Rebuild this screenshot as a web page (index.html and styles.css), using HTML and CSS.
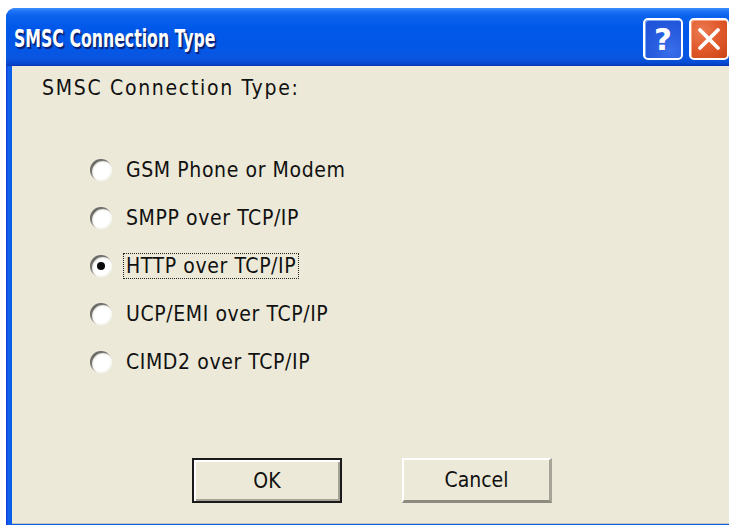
FILE: index.html
```html
<!DOCTYPE html>
<html lang="en">
<head>
<meta charset="utf-8">
<title>SMSC Connection Type</title>
<link rel="stylesheet" href="styles.css">
</head>
<body>
<div class="window">
  <div class="titlebar">
    <span class="title">SMSC Connection Type</span>
    <div class="caption-buttons">
      <button class="cap-btn help" type="button">?</button>
      <button class="cap-btn close" type="button">
        <svg width="28" height="28" viewBox="0 0 28 28" aria-hidden="true">
          <path d="M5 5 L23 23 M23 5 L5 23" stroke="#fff" stroke-width="3.8" stroke-linecap="round"/>
        </svg>
      </button>
    </div>
  </div>
  <div class="client">
    <div class="group-label">SMSC Connection Type:</div>
    <div class="options">
      <label class="option"><span class="radio"></span><span class="text">GSM Phone or Modem</span></label>
      <label class="option"><span class="radio"></span><span class="text">SMPP over TCP/IP</span></label>
      <label class="option"><span class="radio checked"></span><span class="text focused">HTTP over TCP/IP</span></label>
      <label class="option"><span class="radio"></span><span class="text">UCP/EMI over TCP/IP</span></label>
      <label class="option"><span class="radio"></span><span class="text">CIMD2 over TCP/IP</span></label>
    </div>
    <div class="buttons">
      <button class="push default" type="button"><span>OK</span></button>
      <button class="push" type="button"><span>Cancel</span></button>
    </div>
  </div>
</div>
</body>
</html>
```

FILE: styles.css
```css
html, body {
  margin: 0;
  padding: 0;
  background: #ffffff;
  overflow: hidden;
  width: 729px;
  height: 525px;
}

.window {
  margin: 8px 0 0 6px;
  width: 732px;
  padding-bottom: 6px;
  border-radius: 9px 9px 0 0;
  background: linear-gradient(to right, #0831d9 0, #1661f0 2px, #0a5fe8 4px, #0a5fe8 100%);
  overflow: hidden;
}

.titlebar {
  height: 58px;
  display: flex;
  align-items: center;
  padding: 0 9px 0 8px;
  background: linear-gradient(to bottom,
    #3e8ffb 0, #1e74f8 3px, #0a62ec 8px, #0058ea 20px,
    #0457e6 40px, #0a56e0 50px, #0649d0 55px, #0637b8 58px);
  border-radius: 9px 9px 0 0;
}

.title {
  font-family: "DejaVu Sans Condensed", "DejaVu Sans", sans-serif;
  font-weight: bold;
  font-size: 25px;
  color: #ffffff;
  text-shadow: 2px 2px 1px #0a1e6e;
  padding-top: 2px;
  white-space: nowrap;
  transform: scaleX(0.7);
  transform-origin: left center;
}

.caption-buttons {
  margin-left: auto;
  display: flex;
  gap: 6px;
  padding-top: 4px;
}

.cap-btn {
  width: 40px;
  height: 42px;
  border: 2px solid #ffffff;
  border-radius: 5px;
  padding: 0;
  display: flex;
  align-items: center;
  justify-content: center;
  box-sizing: border-box;
}

.help {
  background: radial-gradient(circle at 70% 80%, #3a6fea 0, #2a5ee0 40%, #1c4fd6 100%);
  color: #ffffff;
  font-family: "DejaVu Sans", sans-serif;
  font-weight: bold;
  font-size: 31px;
  line-height: 1;
  box-shadow: inset 1px 1px 0 #7fa6f2;
}

.close {
  background: radial-gradient(circle at 30% 30%, #ec7a52 0, #e05a2c 50%, #cc4416 100%);
  box-shadow: inset 1px 1px 0 #f5a88a;
}

.client {
  margin: 0 0 0 6px;
  width: 720px;
  height: 457px;
  background: #ece9d8;
  border-bottom: 1px solid #c8c5b8;
  display: flex;
  flex-direction: column;
  font-family: "DejaVu Sans Condensed", "DejaVu Sans", sans-serif;
  font-size: 21px;
  letter-spacing: 0.6px;
  color: #111111;
}

.group-label {
  padding: 10px 0 0 30px;
  line-height: 24px;
  letter-spacing: 1.7px;
}

.options {
  margin-top: 46px;
  padding-left: 78px;
  display: flex;
  flex-direction: column;
}

.option {
  height: 48px;
  display: flex;
  align-items: center;
}

.radio {
  width: 22px;
  height: 22px;
  border-radius: 50%;
  box-sizing: border-box;
  background: radial-gradient(circle at 60% 60%, #ffffff 0, #ffffff 45%, #e8e6de 75%, #c9c6ba 100%);
  box-shadow: inset 2px 2px 1px #6b6a66, inset -1px -1px 1px #f4f3ee;
  position: relative;
  flex: none;
}

.radio.checked::after {
  content: "";
  position: absolute;
  left: 7px;
  top: 7px;
  width: 8px;
  height: 8px;
  border-radius: 50%;
  background: #0b0b0b;
}

.text {
  margin-left: 11px;
  padding: 1px 2px;
  line-height: 22px;
  border: 1px dotted transparent;
}

.text.focused {
  border-color: #222222;
}

.buttons {
  margin-top: auto;
  padding-bottom: 20px;
  display: flex;
  justify-content: center;
  gap: 60px;
}

.push {
  width: 150px;
  height: 45px;
  padding: 0;
  box-sizing: border-box;
  background: #ece9d8;
  border-style: solid;
  border-width: 2px 3px 3px 2px;
  border-color: #ffffff #a6a397 #8d8a7f #ffffff;
  font-family: "DejaVu Sans Condensed", "DejaVu Sans", sans-serif;
  font-size: 21px;
  color: #111111;
  display: flex;
  align-items: center;
  justify-content: center;
}

.push.default {
  border: 2px solid #1a1a1a;
  box-shadow: inset 2px 2px 0 #ffffff, inset -2px -2px 0 #a6a397;
}
```
